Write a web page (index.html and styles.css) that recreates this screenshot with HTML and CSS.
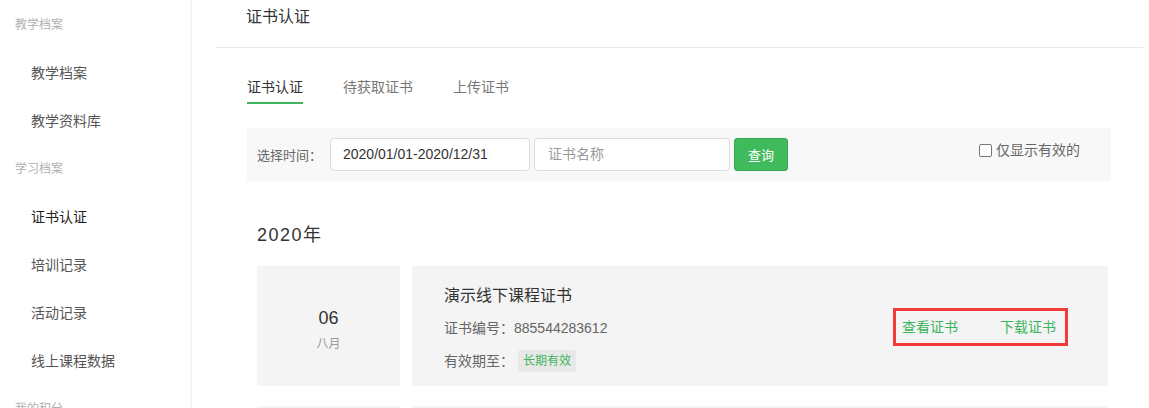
FILE: index.html
```html
<!DOCTYPE html>
<html lang="zh-CN">
<head>
<meta charset="utf-8">
<title>证书认证</title>
<link rel="stylesheet" href="styles.css">
</head>
<body>
<div class="app">
  <aside class="sidebar">
    <div class="group">教学档案</div>
    <div class="item">教学档案</div>
    <div class="item">教学资料库</div>
    <div class="group">学习档案</div>
    <div class="item active">证书认证</div>
    <div class="item">培训记录</div>
    <div class="item">活动记录</div>
    <div class="item">线上课程数据</div>
    <div class="group">我的积分</div>
  </aside>
  <main class="main">
    <div class="page-title">证书认证</div>
    <div class="content">
      <nav class="tabs">
        <span class="tab active">证书认证</span>
        <span class="tab">待获取证书</span>
        <span class="tab">上传证书</span>
      </nav>
      <div class="filter">
        <span class="filter-label">选择时间：</span>
        <div class="input date-input">2020/01/01-2020/12/31</div>
        <div class="input name-input">证书名称</div>
        <button class="btn">查询</button>
        <label class="only-valid"><span class="checkbox"></span>仅显示有效的</label>
      </div>
      <div class="list">
        <div class="year">2020年</div>
        <div class="row">
          <div class="date-card">
            <div class="day">06</div>
            <div class="month">八月</div>
          </div>
          <div class="cert-card">
            <div class="cert-info">
              <div class="cert-title">演示线下课程证书</div>
              <div class="cert-line">证书编号：885544283612</div>
              <div class="cert-line validity">有效期至：<span class="tag">长期有效</span></div>
            </div>
            <div class="actions">
              <a class="link">查看证书</a>
              <a class="link">下载证书</a>
            </div>
          </div>
        </div>
        <div class="row">
          <div class="date-card"></div>
          <div class="cert-card"></div>
        </div>
      </div>
    </div>
  </main>
</div>
</body>
</html>
```
FILE: styles.css
```css
html, body {
  margin: 0;
  padding: 0;
  height: 408px;
  overflow: hidden;
  background: #fff;
}
body {
  font-family: "Liberation Sans", "Noto Sans CJK SC", sans-serif;
  color: #333;
}
.app {
  display: flex;
  height: 408px;
  overflow: hidden;
}
.sidebar {
  width: 192px;
  flex: none;
  box-sizing: border-box;
  border-right: 2px solid #f5f5f5;
  padding-top: 1px;
}
.group {
  height: 48px;
  line-height: 48px;
  padding-left: 15px;
  font-size: 12px;
  color: #b0b0b0;
}
.item {
  height: 48px;
  line-height: 48px;
  padding-left: 31px;
  font-size: 14px;
  color: #555;
}
.item.active {
  color: #222;
}
.main {
  flex: 1;
  padding: 0 6px 0 23px;
  min-width: 0;
}
.page-title {
  height: 48px;
  box-sizing: border-box;
  border-bottom: 1px solid #e8e8e8;
  padding-left: 31px;
  font-size: 16px;
  line-height: 34px;
  color: #333;
}
.content {
  padding: 0 32px;
}
.tabs {
  display: flex;
  gap: 40px;
  margin-top: 29px;
}
.tab {
  font-size: 14px;
  line-height: 20px;
  padding-bottom: 5px;
  color: #777;
  border-bottom: 2px solid transparent;
}
.tab.active {
  color: #333;
  border-bottom-color: #3cb55c;
}
.filter {
  margin-top: 24px;
  background: #f8f8f8;
  height: 53px;
  box-sizing: border-box;
  padding: 10px 31px 10px 10px;
  display: flex;
  align-items: center;
}
.filter-label {
  font-size: 13px;
  color: #666;
  margin-right: 8px;
}
.input {
  height: 33px;
  box-sizing: border-box;
  border: 1px solid #dcdcdc;
  border-radius: 4px;
  background: #fff;
  font-size: 14px;
  line-height: 31px;
}
.date-input {
  width: 200px;
  padding-left: 12px;
  color: #333;
}
.name-input {
  width: 196px;
  margin-left: 4px;
  padding-left: 13px;
  color: #999;
}
.btn {
  margin-left: 4px;
  width: 54px;
  height: 33px;
  border: 1px solid #38a852;
  border-radius: 3px;
  background: #3fba5c;
  color: #fff;
  font-family: inherit;
  font-size: 13px;
  padding: 0;
}
.only-valid {
  margin-left: auto;
  align-self: flex-start;
  margin-top: 2px;
  display: flex;
  align-items: center;
  font-size: 14px;
  line-height: 20px;
  color: #666;
}
.checkbox {
  width: 11px;
  height: 11px;
  border: 1px solid #767676;
  border-radius: 2px;
  background: #fff;
  margin-right: 4px;
}
.list {
  padding: 0 3px 0 10px;
}
.year {
  margin-top: 41px;
  font-size: 18px;
  line-height: 26px;
  letter-spacing: 1.5px;
  color: #333;
}
.row {
  display: flex;
  gap: 12px;
  margin-top: 18px;
  height: 120px;
}
.row + .row {
  margin-top: 20px;
}
.date-card {
  width: 143px;
  flex: none;
  background: #f4f4f4;
  border-radius: 2px;
  box-sizing: border-box;
  padding-top: 40px;
  text-align: center;
}
.day {
  font-size: 18px;
  line-height: 24px;
  color: #333;
}
.month {
  margin-top: 5px;
  font-size: 12px;
  line-height: 18px;
  color: #999;
}
.cert-card {
  flex: 1;
  background: #f4f4f4;
  border-radius: 2px;
  display: flex;
  align-items: center;
  padding: 0 40px 0 32px;
}
.cert-info {
  flex: 1;
  align-self: flex-start;
  padding-top: 18px;
}
.cert-title {
  font-size: 16px;
  line-height: 24px;
  color: #333;
}
.cert-line {
  margin-top: 9px;
  font-size: 14px;
  line-height: 22px;
  color: #666;
}
.validity {
  margin-top: 11px;
  display: flex;
  align-items: center;
}
.tag {
  margin-left: 4px;
  background: #e8e8e8;
  color: #3bb55c;
  font-size: 12px;
  line-height: 22px;
  padding: 0 5px;
  border-radius: 2px;
}
.actions {
  display: flex;
  gap: 42px;
  border: 3px solid #f33a3a;
  padding: 6px 9px 6px 6px;
  margin-top: 2px;
}
.link {
  font-size: 14px;
  line-height: 20px;
  color: #3bb55c;
  text-decoration: none;
}
```
